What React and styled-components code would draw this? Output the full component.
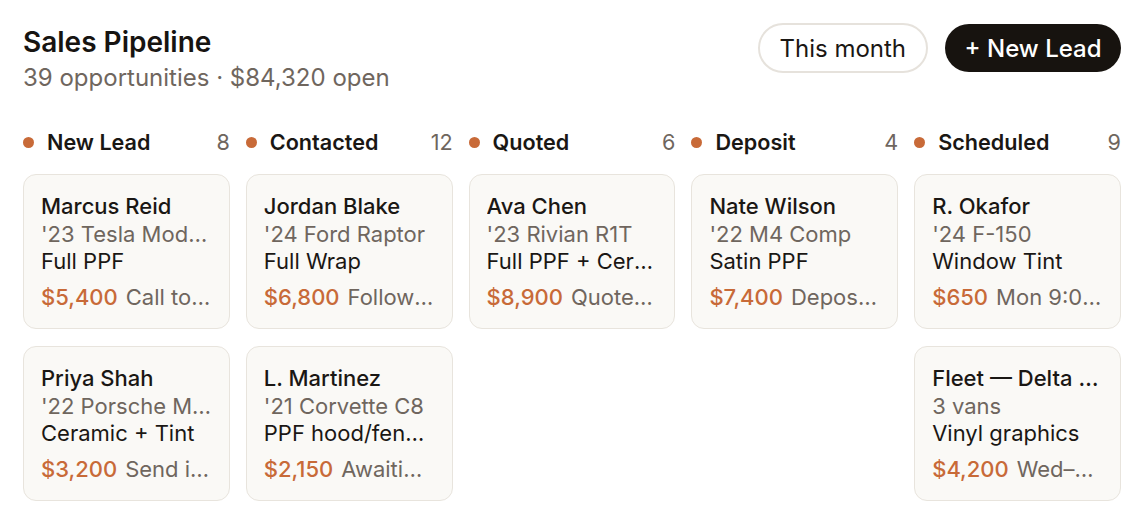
import styled, { createGlobalStyle } from 'styled-components';

const GlobalStyle = createGlobalStyle`
  * { box-sizing: border-box; }
  body {
    margin: 0;
    background: #ffffff;
    font-family: Inter, "Noto Sans", sans-serif;
    font-optical-sizing: none;
    color: #1a1714;
  }
`;

const columns = [
  {
    title: 'New Lead',
    count: 8,
    cards: [
      { name: 'Marcus Reid', vehicle: "'23 Tesla Model Y", service: 'Full PPF', price: '$5,400', note: 'Call tomorrow' },
      { name: 'Priya Shah', vehicle: "'22 Porsche Macan", service: 'Ceramic + Tint', price: '$3,200', note: 'Send intake form' },
    ],
  },
  {
    title: 'Contacted',
    count: 12,
    cards: [
      { name: 'Jordan Blake', vehicle: "'24 Ford Raptor", service: 'Full Wrap', price: '$6,800', note: 'Follow-up Thu' },
      { name: 'L. Martinez', vehicle: "'21 Corvette C8", service: 'PPF hood/fenders', price: '$2,150', note: 'Awaiting reply' },
    ],
  },
  {
    title: 'Quoted',
    count: 6,
    cards: [
      { name: 'Ava Chen', vehicle: "'23 Rivian R1T", service: 'Full PPF + Ceramic', price: '$8,900', note: 'Quote viewed' },
    ],
  },
  {
    title: 'Deposit',
    count: 4,
    cards: [
      { name: 'Nate Wilson', vehicle: "'22 M4 Comp", service: 'Satin PPF', price: '$7,400', note: 'Deposit paid' },
    ],
  },
  {
    title: 'Scheduled',
    count: 9,
    cards: [
      { name: 'R. Okafor', vehicle: "'24 F-150", service: 'Window Tint', price: '$650', note: 'Mon 9:00 AM' },
      { name: 'Fleet — Delta Plumbing', vehicle: '3 vans', service: 'Vinyl graphics', price: '$4,200', note: 'Wed–Fri install' },
    ],
  },
];

const Page = styled.div`
  padding: 24px 25px 24px 23px;
`;

const Header = styled.header`
  display: flex;
  justify-content: space-between;
  align-items: flex-start;
`;

const TitleBlock = styled.div`
  display: flex;
  flex-direction: column;
  gap: 2px;
`;

const Title = styled.h1`
  margin: 0;
  font-size: 28px;
  line-height: 36px;
  font-weight: 600;
  color: #171411;
`;

const Subtitle = styled.p`
  margin: 0;
  font-size: 24px;
  line-height: 32px;
  color: #6f665e;
`;

const Actions = styled.div`
  display: flex;
  gap: 17px;
  margin-top: -1px;
`;

const Pill = styled.button`
  height: ${({ $primary }) => ($primary ? '48px' : '50px')};
  margin-top: ${({ $primary }) => ($primary ? '1px' : '0')};
  padding: 0 ${({ $primary }) => ($primary ? '19.5px' : '20px')};
  border-radius: 999px;
  font-family: inherit;
  font-size: 24px;
  font-weight: ${({ $primary }) => ($primary ? 500 : 400)};
  border: ${({ $primary }) => ($primary ? 'none' : '2px solid #e6e2dc')};
  background: ${({ $primary }) => ($primary ? '#17130f' : '#ffffff')};
  color: ${({ $primary }) => ($primary ? '#ffffff' : '#1a1714')};
  cursor: pointer;
`;

const Board = styled.div`
  display: grid;
  grid-template-columns: repeat(5, 1fr);
  gap: 16px;
  margin-top: 33px;
`;

const Column = styled.section`
  display: flex;
  flex-direction: column;
  min-width: 0;
`;

const ColumnHead = styled.div`
  display: flex;
  align-items: center;
  height: 30px;
  margin-bottom: 17px;
`;

const Dot = styled.span`
  width: 11px;
  height: 11px;
  border-radius: 50%;
  background: #c86a38;
  margin: 0 13px 0 0;
  flex-shrink: 0;
`;

const ColumnTitle = styled.span`
  flex: 1;
  font-size: 21.6px;
  font-weight: 600;
  color: #1a1714;
`;

const Count = styled.span`
  font-size: 21.6px;
  color: #6f665e;
`;

const Cards = styled.div`
  display: flex;
  flex-direction: column;
  gap: 17px;
`;

const Card = styled.article`
  background: #faf9f6;
  border: 1.5px solid #e8e4dd;
  border-radius: 13px;
  padding: 18px 17px 17px;
  font-size: 22px;
  line-height: 27.5px;
`;

const Line = styled.div`
  white-space: nowrap;
  overflow: hidden;
  text-overflow: ellipsis;
  color: ${({ $muted }) => ($muted ? '#6f665e' : '#1a1714')};
  font-weight: ${({ $strong }) => ($strong ? 500 : 400)};
`;

const PriceLine = styled(Line)`
  margin-top: 8px;
  color: #6f665e;
`;

const Price = styled.span`
  color: #c86a38;
  font-weight: 500;
  margin-right: 8px;
`;

function LeadCard({ name, vehicle, service, price, note }) {
  return (
    <Card>
      <Line $strong>{name}</Line>
      <Line $muted>{vehicle}</Line>
      <Line>{service}</Line>
      <PriceLine>
        <Price>{price}</Price>
        {note}
      </PriceLine>
    </Card>
  );
}

export default function App() {
  return (
    <Page>
      <GlobalStyle />
      <Header>
        <TitleBlock>
          <Title>Sales Pipeline</Title>
          <Subtitle>39 opportunities · $84,320 open</Subtitle>
        </TitleBlock>
        <Actions>
          <Pill>This month</Pill>
          <Pill $primary>+ New Lead</Pill>
        </Actions>
      </Header>
      <Board>
        {columns.map((col) => (
          <Column key={col.title}>
            <ColumnHead>
              <Dot />
              <ColumnTitle>{col.title}</ColumnTitle>
              <Count>{col.count}</Count>
            </ColumnHead>
            <Cards>
              {col.cards.map((card) => (
                <LeadCard key={card.name} {...card} />
              ))}
            </Cards>
          </Column>
        ))}
      </Board>
    </Page>
  );
}
